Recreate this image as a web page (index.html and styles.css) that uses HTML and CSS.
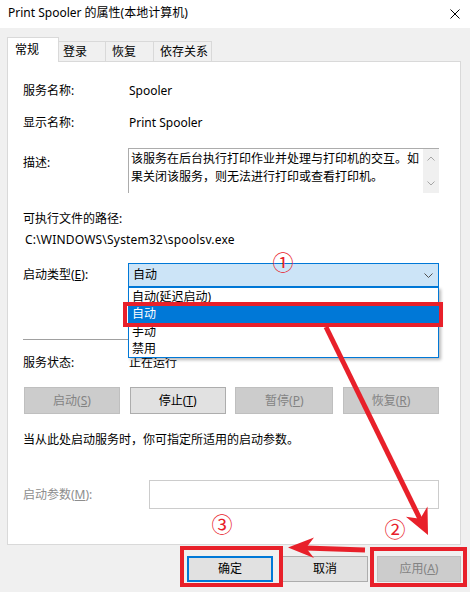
FILE: index.html
```html
<!DOCTYPE html>
<html lang="zh-CN">
<head>
<meta charset="utf-8">
<title>Print Spooler 的属性(本地计算机)</title>
<link rel="stylesheet" href="styles.css">
</head>
<body>
<div class="window">
  <div class="titlebar">
    <span class="title">Print Spooler 的属性(本地计算机)</span>
    <svg class="close" width="10" height="10" viewBox="0 0 10 10"><path d="M0.5 0.5L9.5 9.5M9.5 0.5L0.5 9.5" stroke="#000" stroke-width="1" fill="none"/></svg>
  </div>
  <div class="main">
    <div class="tabs">
      <div class="tab active">常规</div>
      <div class="tab t-login">登录</div>
      <div class="tab t-recover">恢复</div>
      <div class="tab t-dep">依存关系</div>
    </div>
    <div class="panel">
      <div class="row r-name"><span class="label">服务名称:</span><span class="value">Spooler</span></div>
      <div class="row r-display"><span class="label">显示名称:</span><span class="value">Print Spooler</span></div>
      <div class="row r-desc">
        <span class="label">描述:</span>
        <div class="textbox">
          <div class="tb-text">该服务在后台执行打印作业并处理与打印机的交互。如<br>果关闭该服务，则无法进行打印或查看打印机。</div>
          <div class="scrollbar">
            <svg width="8" height="5" viewBox="0 0 8 5"><path d="M0.5 4.5L4 1L7.5 4.5" stroke="#a6a6a6" stroke-width="1" fill="none"/></svg>
            <svg width="8" height="5" viewBox="0 0 8 5"><path d="M0.5 0.5L4 4L7.5 0.5" stroke="#a6a6a6" stroke-width="1" fill="none"/></svg>
          </div>
        </div>
      </div>
      <div class="row r-pathlabel">可执行文件的路径:</div>
      <div class="row r-path">C:\WINDOWS\System32\spoolsv.exe</div>
      <div class="row r-type">
        <span class="label">启动类型(<u>E</u>):</span>
        <div class="combo">
          <span class="combo-text">自动</span>
          <svg class="chev" width="9" height="5" viewBox="0 0 9 5"><path d="M0.5 0.5L4.5 4.5L8.5 0.5" stroke="#505050" stroke-width="1" fill="none"/></svg>
          <ul class="dropdown">
            <li>自动(延迟启动)</li>
            <li class="sel">自动</li>
            <li>手动</li>
            <li>禁用</li>
          </ul>
        </div>
      </div>
      <div class="separator"></div>
      <div class="row r-status"><span class="label">服务状态:</span><span class="value">正在运行</span></div>
      <div class="btnrow">
        <div class="btn disabled b1">启动(<u>S</u>)</div>
        <div class="btn b2">停止(<u>T</u>)</div>
        <div class="btn disabled b3">暂停(<u>P</u>)</div>
        <div class="btn disabled b4">恢复(<u>R</u>)</div>
      </div>
      <div class="row r-hint">当从此处启动服务时，你可指定所适用的启动参数。</div>
      <div class="row r-param">
        <span class="label plabel">启动参数(<u>M</u>):</span>
        <div class="input"></div>
      </div>
    </div>
    <div class="footer">
      <div class="btn fbtn default">确定</div>
      <div class="btn fbtn">取消</div>
      <div class="btn fbtn disabled apply">应用(<u>A</u>)</div>
    </div>
  </div>
  <svg class="annot" width="470" height="592" viewBox="0 0 470 592">
    <g fill="none" stroke="#e8202a" stroke-width="4">
      <rect x="125" y="304" width="316" height="21"/>
      <rect x="182" y="548" width="99" height="37"/>
      <rect x="372" y="549" width="93" height="36"/>
    </g>
    <g stroke="#e8202a" stroke-width="5" stroke-linecap="butt">
      <line x1="326" y1="327" x2="420" y2="519"/>
      <line x1="365" y1="550" x2="305" y2="548"/>
    </g>
    <g fill="#e8202a">
      <polygon points="428,535 427.5,506.4 420.2,518.8 405.9,516.8"/>
      <polygon points="288,547.5 314,537.5 306,548 314,558"/>
    </g>
    <g class="num" fill="#e8202a">
      <text x="283" y="261">①</text>
      <text x="395" y="528">②</text>
      <text x="222" y="523">③</text>
    </g>
  </svg>
</div>
</body>
</html>
```

FILE: styles.css
```css
* { box-sizing: border-box; }
html, body { margin: 0; padding: 0; }
body {
  width: 470px;
  height: 592px;
  font-family: "Noto Sans", "Noto Sans CJK SC", sans-serif;
  font-size: 12px;
  color: #000;
  background: #f0f0f0;
}
.window {
  position: relative;
  width: 470px;
  height: 592px;
  overflow: hidden;
  background: #f0f0f0;
}
.titlebar {
  height: 28px;
  background: #fff;
  display: flex;
  align-items: center;
  justify-content: space-between;
  padding: 0 10px 2px 8px;
}
.title { line-height: 16px; }
.close { display: block; margin-top: 1px; }

.main { padding: 9px 9px 0 7px; }

.tabs {
  display: flex;
  align-items: flex-end;
  height: 25px;
}
.tab {
  height: 21px;
  line-height: 20px;
  border: 1px solid #d9d9d9;
  border-bottom: none;
  background: #f0f0f0;
  margin-left: -1px;
  white-space: nowrap;
}
.tab.active {
  position: relative;
  z-index: 1;
  height: 25px;
  line-height: 23px;
  background: #fff;
  margin-left: 0;
  width: 52px;
  padding-left: 7px;
}
.t-login { width: 48px; padding-left: 4px; }
.t-recover { width: 49px; padding-left: 6px; }
.t-dep { width: 59px; padding-left: 6px; }

.panel {
  position: relative;
  margin-top: -1px;
  height: 484px;
  border: 1px solid #d9d9d9;
  background: #fff;
  padding: 0 21px 0 15px;
}
.row {
  display: flex;
  line-height: 16px;
  height: 16px;
  white-space: nowrap;
}
.label { width: 105px; flex: none; }
.value { padding-left: 1px; }

.r-name { margin-top: 21px; }
.r-display { margin-top: 16px; }
.r-desc { margin-top: 17px; height: 45px; }
.r-desc .label { margin-top: 7px; }
.textbox {
  width: 311px;
  height: 45px;
  display: flex;
  border-top: 1px solid #acacac;
  border-left: 1px solid #acacac;
  background: #fff;
}
.tb-text {
  flex: 1;
  padding: 1px 0 0 2px;
  line-height: 18px;
  white-space: nowrap;
}
.scrollbar {
  width: 16px;
  height: 44px;
  background: #f0f0f0;
  display: flex;
  flex-direction: column;
  align-items: center;
  justify-content: space-between;
  padding: 7px 0 7px 0;
}
.scrollbar svg { display: block; }

.r-pathlabel { margin-top: 18px; }
.r-path { margin-top: 5px; padding-left: 2px; letter-spacing: 0.2px; }

.r-type { margin-top: 15px; height: 24px; line-height: 24px; }
.combo {
  position: relative;
  width: 311px;
  height: 24px;
  border: 1px solid #0078d7;
  background: #cce4f7;
  line-height: 22px;
  padding-left: 4px;
}
.chev { position: absolute; right: 5px; top: 9px; }
.dropdown {
  position: absolute;
  z-index: 2;
  left: -1px;
  top: 23px;
  width: 311px;
  margin: 0;
  padding: 0;
  list-style: none;
  background: #fff;
  border: 1px solid #0078d7;
  box-shadow: 2px 2px 3px rgba(0, 0, 0, 0.28);
}
.dropdown li {
  height: 17px;
  line-height: 17px;
  padding-left: 3px;
}
.dropdown li.sel {
  height: 18px;
  line-height: 18px;
  background: #0078d7;
  color: #fff;
}

.separator {
  margin-top: 52px;
  height: 1px;
  background: #a0a0a0;
}
.r-status { margin-top: 15px; }

.btnrow {
  margin-top: 16px;
  height: 27px;
  display: flex;
  justify-content: space-between;
  padding-left: 1px;
}
.btn {
  height: 27px;
  border: 1px solid #adadad;
  background: #e1e1e1;
  text-align: center;
  line-height: 25px;
  white-space: nowrap;
}
.btn.disabled {
  background: #cccccc;
  border-color: #bfbfbf;
  color: #838383;
}
.b1, .b2, .b4 { width: 96px; }
.b3 { width: 98px; }

.r-hint { margin-top: 18px; }
.r-param { margin-top: 32px; height: 29px; line-height: 29px; }
.plabel { width: 126px; color: #8d8d8d; }
.input {
  width: 290px;
  height: 29px;
  border: 1px solid #cccccc;
  background: #fff;
}

.footer {
  margin-top: 11px;
  display: flex;
  justify-content: flex-end;
  gap: 9px;
}
.fbtn { width: 86px; height: 26px; line-height: 24px; }
.fbtn.default { border: 2px solid #0078d7; line-height: 22px; }
.fbtn.apply { width: 84px; }

.annot {
  position: absolute;
  left: 0;
  top: 0;
  pointer-events: none;
  z-index: 10;
}
.num text {
  font-family: "Noto Sans CJK SC", sans-serif;
  font-size: 21px;
  text-anchor: middle;
  dominant-baseline: central;
}
```
